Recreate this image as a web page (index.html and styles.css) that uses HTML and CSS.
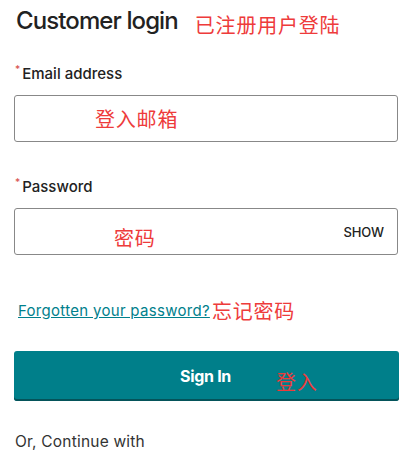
FILE: index.html
```html
<!DOCTYPE html>
<html lang="en">
<head>
    <meta charset="UTF-8">
    <meta name="viewport" content="width=device-width, initial-scale=1.0">
    <title>Customer login</title>
    <link rel="stylesheet" href="styles.css">
</head>
<body>
    <div class="login">
        <div class="title-row">
            <h1>Customer login</h1>
            <span class="note note-title">已注册用户登陆</span>
        </div>

        <div class="field field-email">
            <label for="email"><span class="req">*</span>Email address</label>
            <div class="input-box">
                <span class="note note-email">登入邮箱</span>
            </div>
        </div>

        <div class="field field-password">
            <label for="password"><span class="req">*</span>Password</label>
            <div class="input-box">
                <span class="note note-password">密码</span>
                <span class="show">SHOW</span>
            </div>
        </div>

        <div class="forgot">
            <a href="#">Forgotten your password?</a><span class="note">忘记密码</span>
        </div>

        <button class="sign-in">
            <span class="sign-in-text">Sign In</span>
            <span class="note note-button">登入</span>
        </button>

        <p class="continue">Or, Continue with</p>
    </div>
</body>
</html>
```

FILE: styles.css
```css
body {
    margin: 0;
    font-family: Inter, "Noto Sans", sans-serif;
    color: #222;
    background: #fff;
}
.login {
    padding: 0 13px 0 14px;
}
.title-row {
    display: flex;
    align-items: flex-end;
    height: 40px;
    padding-left: 2px;
}
h1 {
    margin: 0;
    font-size: 24px;
    font-weight: 500;
    letter-spacing: -0.9px;
    line-height: 38px;
}
.note {
    color: #ee3b3b;
    font-family: "Noto Sans CJK SC", sans-serif;
    font-size: 20px;
    font-weight: 400;
    letter-spacing: 0.8px;
}
.note-title {
    margin-left: 17px;
    line-height: 30px;
}
.field label {
    display: block;
    font-size: 15px;
    font-weight: 500;
    letter-spacing: 0;
    padding-left: 1px;
}
.req {
    color: #d9534f;
    font-size: 10px;
    vertical-align: 6px;
    margin-right: 2px;
}
.field-email {
    margin-top: 23px;
}
.field-password {
    margin-top: 34px;
}
.input-box {
    display: flex;
    align-items: center;
    height: 45px;
    margin-top: 12px;
    border: 1px solid #888;
    border-radius: 3px;
}
.note-email {
    margin-left: 80px;
}
.note-password {
    margin-left: 99px;
    margin-top: 12px;
}
.show {
    margin-left: auto;
    margin-right: 13px;
    font-size: 13px;
    font-weight: 500;
    letter-spacing: -0.1px;
}
.forgot {
    margin-top: 41px;
    padding-left: 4px;
    display: flex;
    align-items: center;
}
.forgot a {
    color: #00808c;
    font-size: 15px;
    letter-spacing: 0.3px;
}
.forgot .note {
    margin-left: 2px;
}
.sign-in {
    display: flex;
    align-items: center;
    width: 385px;
    height: 50px;
    margin-top: 26px;
    padding: 0;
    border: none;
    border-radius: 3px;
    background: #007f8a;
    box-shadow: inset 0 -2px 0 #04535a;
    font-family: inherit;
}
.sign-in-text {
    margin-left: 166px;
    color: #fff;
    font-size: 16px;
    font-weight: 700;
    letter-spacing: -0.3px;
}
.note-button {
    margin-left: 45px;
    margin-top: 10px;
}
.continue {
    margin: 32px 0 0 1px;
    font-size: 15.5px;
    line-height: 18px;
    letter-spacing: 0.2px;
    color: #333;
}
```
